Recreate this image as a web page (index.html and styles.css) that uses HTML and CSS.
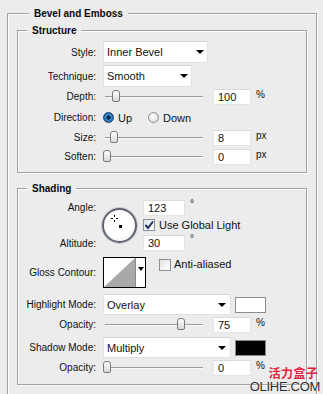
FILE: index.html
```html
<!DOCTYPE html>
<html>
<head>
<meta charset="utf-8">
<link rel="stylesheet" href="styles.css">
</head>
<body>
<div class="panel">
  <div class="group outer">
    <div class="legend">Bevel and Emboss</div>

    <div class="group sub structure">
      <div class="legend">Structure</div>
      <div class="rows">
        <div class="row h22">
          <span class="lbl">Style:</span>
          <div class="select w-style"><span>Inner Bevel</span><i class="arrow"></i></div>
        </div>
        <div class="row h22 mt2">
          <span class="lbl">Technique:</span>
          <div class="select w-tech"><span>Smooth</span><i class="arrow"></i></div>
        </div>
        <div class="row h17 mt1">
          <span class="lbl">Depth:</span>
          <div class="slider"><span class="thumb" style="left:7px"></span></div>
          <div class="input">100</div>
          <span class="unit">%</span>
        </div>
        <div class="row h17 mt4">
          <span class="lbl">Direction:</span>
          <span class="radio on"></span><span class="rtext">Up</span>
          <span class="radio down"></span><span class="rtext">Down</span>
        </div>
        <div class="row h17 mt3">
          <span class="lbl">Size:</span>
          <div class="slider"><span class="thumb" style="left:5px"></span></div>
          <div class="input">8</div>
          <span class="unit">px</span>
        </div>
        <div class="row h17 mt2">
          <span class="lbl">Soften:</span>
          <div class="slider"><span class="thumb" style="left:-2px"></span></div>
          <div class="input">0</div>
          <span class="unit">px</span>
        </div>
      </div>
    </div>

    <div class="group sub shading">
      <div class="legend">Shading</div>
      <div class="angle-block">
        <div class="lblcol">
          <span class="lbl">Angle:</span>
          <span class="lbl">Altitude:</span>
        </div>
        <div class="dial">
          <span class="cross"></span>
          <span class="dot"></span>
        </div>
        <div class="angcol">
          <div class="arow"><div class="input wa">123</div><span class="deg">°</span></div>
          <div class="crow"><span class="check on"><svg viewBox="0 0 12 12" width="12" height="12"><path d="M2.5 6 L5 9 L10 2.5" fill="none" stroke="#1c2f5c" stroke-width="2"/></svg></span><span class="ctext">Use Global Light</span></div>
          <div class="arow"><div class="input wa">30</div><span class="deg">°</span></div>
        </div>
      </div>

      <div class="row gloss">
        <span class="lbl">Gloss Contour:</span>
        <div class="contour">
          <svg width="31" height="29" viewBox="0 0 31 29"><rect width="31" height="29" fill="#fff"/><polygon points="0,29 31,0 31,29" fill="#a9a9a9"/></svg>
          <div class="cdrop"><i class="arrow"></i></div>
        </div>
        <span class="check aa"></span><span class="ctext">Anti-aliased</span>
      </div>

      <div class="row h21 mt6">
        <span class="lbl">Highlight Mode:</span>
        <div class="select w-mode"><span>Overlay</span><i class="arrow"></i></div>
        <span class="swatch white"></span>
      </div>
      <div class="row h17 mt1">
        <span class="lbl">Opacity:</span>
        <div class="slider"><span class="thumb" style="left:72px"></span></div>
        <div class="input">75</div>
        <span class="unit">%</span>
      </div>
      <div class="row h21 mt4">
        <span class="lbl">Shadow Mode:</span>
        <div class="select w-mode"><span>Multiply</span><i class="arrow"></i></div>
        <span class="swatch black"></span>
      </div>
      <div class="row h17 mt1">
        <span class="lbl">Opacity:</span>
        <div class="slider"><span class="thumb" style="left:-2px"></span></div>
        <div class="input">0</div>
        <span class="unit">%</span>
      </div>
    </div>
  </div>

  <div class="watermark">
    <div class="wm-cn">活力盒子</div>
    <div class="wm-en">OLIHE.COM</div>
  </div>
</div>
</body>
</html>
```
FILE: styles.css
```css
html, body {
  margin: 0;
  padding: 0;
}
body {
  background: #ececec;
  font-family: "Liberation Sans", Arial, sans-serif;
  font-size: 10px;
  color: #111;
  width: 323px;
  height: 394px;
  overflow: hidden;
}
.panel {
  position: relative;
  display: flow-root;
  height: 394px;
  overflow: hidden;
}
.group {
  border: 1px solid #a2a2a2;
  box-shadow: 1px 1px 0 #fbfbfb, inset 1px 1px 0 #fbfbfb;
}
.outer {
  margin: 13px 6px 0 7px;
  padding: 0 9px 9px 9px;
  border-bottom: none;
}
.legend {
  display: block;
  width: fit-content;
  margin-top: -7px;
  height: 13px;
  line-height: 13px;
  padding: 0 5px;
  background: #ececec;
  font-weight: bold;
  font-size: 10px;
  color: #0a0a0a;
}
.outer > .legend {
  margin-left: 12px;
}
.sub > .legend {
  margin-left: 9px;
}
.structure {
  margin-top: 10px;
  padding-bottom: 7px;
}
.shading {
  margin-top: 15px;
  padding-bottom: 8px;
}
.rows {
  margin-top: 4px;
}
.row {
  display: flex;
  align-items: center;
}
.h22 { height: 22px; }
.h21 { height: 21px; }
.h17 { height: 17px; }
.mt1 { margin-top: 1px; }
.mt2 { margin-top: 2px; }
.mt3 { margin-top: 3px; }
.mt4 { margin-top: 4px; }
.mt6 { margin-top: 6px; }

.lbl {
  flex: none;
  width: 78px;
  margin-right: 7px;
  text-align: right;
  white-space: nowrap;
}

.select {
  box-sizing: border-box;
  height: 100%;
  display: flex;
  align-items: center;
  background: #fff;
  border: 1px solid #e2e2e2;
  border-top-color: #d6d6d6;
  padding-left: 3px;
  font-size: 11px;
  color: #111;
}
.w-style { width: 105px; }
.w-tech { width: 89px; }
.w-mode { width: 128px; }
.arrow {
  display: block;
  margin-left: auto;
  margin-right: 3px;
  width: 0;
  height: 0;
  border-left: 4px solid transparent;
  border-right: 4px solid transparent;
  border-top: 4px solid #000;
}
.w-mode .arrow { margin-right: 4px; }

.slider {
  position: relative;
  flex: none;
  width: 98px;
  height: 1px;
  margin-left: 2px;
  background: #9a9a9a;
  border-bottom: 1px solid #fafafa;
}
.thumb {
  position: absolute;
  top: -6px;
  width: 6px;
  height: 10px;
  border: 1px solid #7c7c7c;
  border-radius: 3px 3px 2px 2px;
  background: linear-gradient(#ffffff, #d8d8d8);
}
.input {
  box-sizing: border-box;
  flex: none;
  width: 38px;
  height: 16px;
  margin-left: 10px;
  padding-left: 4px;
  background: #fff;
  border: 1px solid #e4e4e4;
  border-top-color: #d9d9d9;
  font-size: 11px;
  line-height: 14px;
  color: #111;
}
.unit {
  margin-left: 5px;
  font-size: 10px;
  align-self: flex-start;
  margin-top: 1px;
}

.radio {
  flex: none;
  box-sizing: border-box;
  width: 11px;
  height: 11px;
  border-radius: 50%;
  border: 1px solid #8c8c8c;
  background: radial-gradient(circle at 40% 40%, #ffffff, #d4d4d4);
}
.radio.on {
  border-color: #1f3f63;
  background: radial-gradient(circle, #0e2c4c 0 1.8px, #3f95dc 2.6px, #2467a8 4.5px);
}
.radio.down {
  margin-left: 16px;
}
.rtext {
  margin-left: 4px;
  font-size: 11px;
}

/* angle block */
.angle-block {
  display: flex;
  margin-top: 4px;
  height: 53px;
}
.lblcol {
  display: flex;
  flex-direction: column;
  justify-content: space-between;
  width: 78px;
  flex: none;
}
.lblcol .lbl {
  height: 17px;
  line-height: 17px;
  margin-right: 0;
}
.dial {
  position: relative;
  flex: none;
  box-sizing: border-box;
  align-self: center;
  width: 35px;
  height: 35px;
  margin-left: 6px;
  border-radius: 50%;
  border: 2px solid #5f6470;
  background: radial-gradient(circle at 45% 40%, #ffffff 55%, #e6e6e6);
  box-shadow: 0 0 0 1px #c9cbd0;
}
.cross {
  position: absolute;
  left: 7px;
  top: 5px;
  width: 7px;
  height: 7px;
  background:
    linear-gradient(#000, #000) 3px 0 / 1px 2px no-repeat,
    linear-gradient(#000, #000) 3px 5px / 1px 2px no-repeat,
    linear-gradient(#000, #000) 0 3px / 2px 1px no-repeat,
    linear-gradient(#000, #000) 5px 3px / 2px 1px no-repeat;
}
.dot {
  position: absolute;
  left: 15px;
  top: 15px;
  width: 3px;
  height: 3px;
  background: #000;
}
.angcol {
  margin-left: 6px;
  display: flex;
  flex-direction: column;
}
.arow {
  display: flex;
  align-items: center;
  height: 17px;
}
.input.wa {
  width: 42px;
  margin-left: 0;
}
.deg {
  margin-left: 5px;
  align-self: flex-start;
  font-size: 10px;
  margin-top: -1px;
}
.crow {
  display: flex;
  align-items: center;
  height: 14px;
  margin: 2px 0 2px;
}
.check {
  flex: none;
  box-sizing: border-box;
  width: 12px;
  height: 12px;
  border: 1px solid #8b8f96;
  background: linear-gradient(135deg, #e3e3e3, #ffffff);
  display: block;
}
.check svg {
  display: block;
  margin: -1px;
}
.check.on {
  background: linear-gradient(135deg, #dfe3ea, #ffffff);
}
.ctext {
  margin-left: 4px;
  font-size: 11px;
}

/* gloss */
.gloss {
  height: 31px;
  margin-top: 5px;
  align-items: center;
}
.contour {
  flex: none;
  display: flex;
  box-sizing: border-box;
  width: 43px;
  height: 31px;
  border: 1px solid #000;
  background: #fff;
}
.contour svg {
  display: block;
}
.cdrop {
  box-sizing: border-box;
  width: 10px;
  border-left: 1px solid #8a8a8a;
  padding-top: 9px;
}
.cdrop .arrow {
  margin: 0 auto;
  border-left-width: 3px;
  border-right-width: 3px;
  border-top-width: 4px;
}
.check.aa {
  align-self: flex-start;
  margin-top: 2px;
  margin-left: 13px;
}
.gloss .ctext {
  align-self: flex-start;
  margin-top: 1px;
  margin-left: 3px;
}

.swatch {
  flex: none;
  box-sizing: border-box;
  width: 31px;
  height: 16px;
  margin-left: 4px;
  border: 1px solid #8d8d8d;
}
.swatch.white { background: #fff; }
.swatch.black { background: #000; }

/* watermark */
.watermark {
  position: absolute;
  left: 246px;
  top: 365px;
  width: 77px;
  text-align: right;
}
.wm-cn {
  font-family: "Noto Sans CJK SC", sans-serif;
  font-weight: bold;
  font-size: 12px;
  line-height: 15px;
  color: #e5213f;
  padding-right: 5px;
  letter-spacing: 0.3px;
}
.wm-en {
  font-family: "Liberation Sans", Arial, sans-serif;
  font-size: 13px;
  line-height: 14px;
  color: #2b2b2b;
  padding-right: 3px;
  letter-spacing: -0.3px;
  text-shadow: 0 0 1px #fff, 0 0 1px #fff;
}
```
